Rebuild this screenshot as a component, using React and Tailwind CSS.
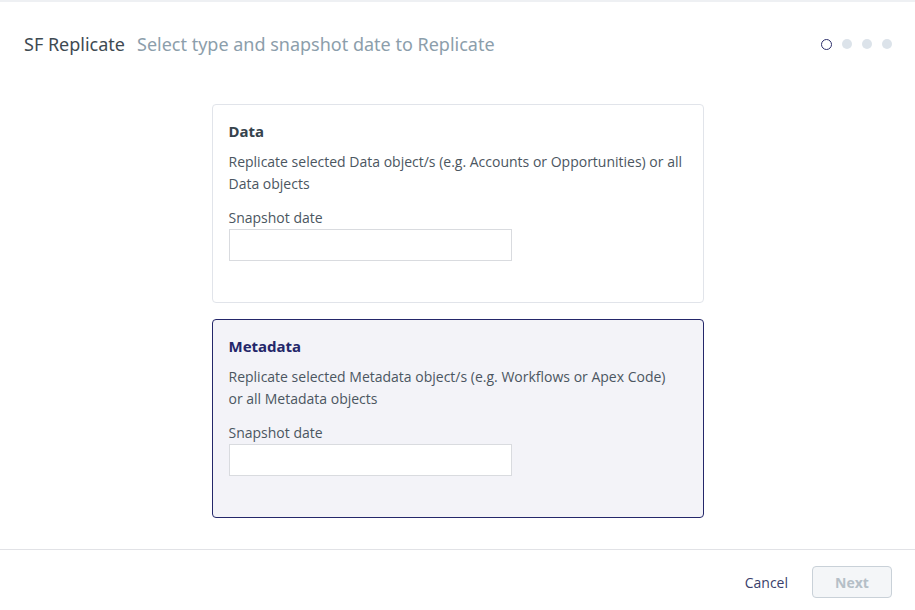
const Card = ({ title, text, selected }) => (
  <div
    className={`w-[492px] rounded border px-[16px] pt-[16px] pb-[41px] ${
      selected ? "border-[#24276a] bg-[#f3f3f8]" : "border-[#e1e4ea] bg-white"
    }`}
  >
    <h2
      className={`text-[15px] font-bold leading-5 ${selected ? "text-[#24276a]" : "text-[#36434d]"}`}
      style={{ fontFamily: "'Noto Sans', Lato, sans-serif" }}
    >
      {title}
    </h2>
    <p className="mt-[10px] w-[454px] text-[14px] leading-[22px] text-[#4b5661]">{text}</p>
    <label className="mt-[12px] block text-[14px] leading-[22px] text-[#4b5661]">Snapshot date</label>
    <input className="h-[32px] w-[283px] border border-[#d9dbdf] bg-white outline-none" />
  </div>
);

const App = () => {
  return (
    <div
      className="flex h-[610px] w-[915px] flex-col bg-white"
      style={{ fontFamily: "'Open Sans', 'Noto Sans', sans-serif" }}
    >
      <header className="flex h-[86px] items-center border-t-2 border-[#eef0f3] pl-[24px] pr-[23px]">
        <div className="flex items-baseline gap-[12px] text-[18px]" style={{ fontFamily: "'Noto Sans', Lato, sans-serif" }}>
          <span className="text-[#3e4a52]">SF Replicate</span>
          <span className="text-[#8c9eab]">Select type and snapshot date to Replicate</span>
        </div>
        <div className="ml-auto flex items-center gap-[10px]">
          <span className="h-[11px] w-[11px] rounded-full border-[1.5px] border-[#2c2f6b]" />
          <span className="h-[10px] w-[10px] rounded-full bg-[#dce3ea]" />
          <span className="h-[10px] w-[10px] rounded-full bg-[#dce3ea]" />
          <span className="h-[10px] w-[10px] rounded-full bg-[#dce3ea]" />
        </div>
      </header>

      <main className="flex flex-1 flex-col items-center gap-[16px] pt-[18px]">
        <Card
          title="Data"
          text="Replicate selected Data object/s (e.g. Accounts or Opportunities) or all Data objects"
        />
        <Card
          title="Metadata"
          selected
          text="Replicate selected Metadata object/s (e.g. Workflows or Apex Code) or all Metadata objects"
        />
      </main>

      <footer className="flex h-[61px] items-center justify-end gap-[24px] border-t border-[#e1e2e6] pt-[4px] pr-[23px]">
        <button className="text-[14px] text-[#3a3f6b]">Cancel</button>
        <button
          disabled
          className="h-[32px] w-[80px] rounded border border-[#c9d1d8] bg-[#f4f6f8] text-[14px] font-bold text-[#b5bfc7]"
        >
          Next
        </button>
      </footer>
    </div>
  );
};

export default App;
